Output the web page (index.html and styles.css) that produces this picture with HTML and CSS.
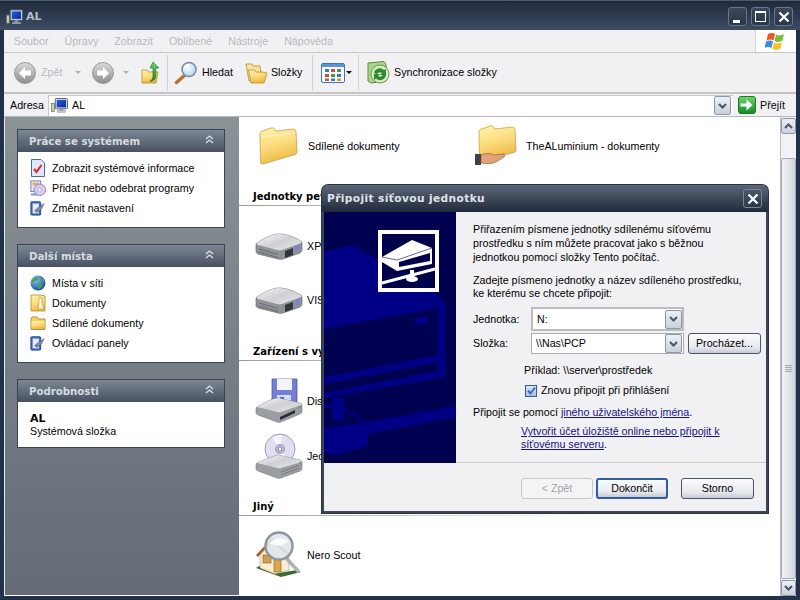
FILE: index.html
```html
<!DOCTYPE html>
<html lang="cs">
<head>
<meta charset="utf-8">
<title>AL</title>
<link rel="stylesheet" href="styles.css">
</head>
<body>
<svg class="sprite" aria-hidden="true">
  <defs>
    <linearGradient id="gFolder" x1="0" y1="0" x2="0.3" y2="1"><stop offset="0" stop-color="#fff3b0"/><stop offset="0.55" stop-color="#fbdc7c"/><stop offset="1" stop-color="#eeb945"/></linearGradient>
    <linearGradient id="gBack" x1="0" y1="0" x2="0" y2="1"><stop offset="0" stop-color="#dcdcdc"/><stop offset="1" stop-color="#8e8e8e"/></linearGradient>
    <linearGradient id="gScreen" x1="0" y1="0" x2="1" y2="1"><stop offset="0" stop-color="#2a5fe0"/><stop offset="1" stop-color="#0a2a90"/></linearGradient>
    <linearGradient id="gGreen" x1="0" y1="0" x2="0" y2="1"><stop offset="0" stop-color="#6fd56a"/><stop offset="1" stop-color="#128a24"/></linearGradient>
    <linearGradient id="gSilver" x1="0" y1="0" x2="1" y2="1"><stop offset="0" stop-color="#f6f6f6"/><stop offset="0.5" stop-color="#cfd0d3"/><stop offset="1" stop-color="#e8e8ea"/></linearGradient>
    <radialGradient id="gGlobe" cx="0.35" cy="0.3" r="0.8"><stop offset="0" stop-color="#8cc4f2"/><stop offset="1" stop-color="#123f96"/></radialGradient>
    <radialGradient id="gLens" cx="0.4" cy="0.35" r="0.7"><stop offset="0" stop-color="#ffffff"/><stop offset="1" stop-color="#a9d3f3"/></radialGradient>
    <pattern id="dDark" width="2" height="2" patternUnits="userSpaceOnUse"><rect width="2" height="2" fill="#000040"/><rect width="1" height="1" fill="#000060"/><rect x="1" y="1" width="1" height="1" fill="#000060"/></pattern>
    <pattern id="dLight" width="2" height="2" patternUnits="userSpaceOnUse"><rect width="2" height="2" fill="#00008c"/><rect width="1" height="1" fill="#00007e"/><rect x="1" y="1" width="1" height="1" fill="#00007e"/></pattern>

    <symbol id="i-pc" viewBox="0 0 18 16">
      <rect x="0.5" y="6" width="3" height="8.5" fill="#b9d6a8" stroke="#5d6a62" stroke-width="0.7"/>
      <rect x="4.5" y="0.5" width="13" height="11" rx="1" fill="#dfe3ea" stroke="#4f5a6e"/>
      <rect x="6" y="2" width="10" height="8" fill="url(#gScreen)"/>
      <rect x="9" y="11.5" width="4" height="2" fill="#8d95a3"/>
      <rect x="6.5" y="13.5" width="9" height="1.7" fill="#c3c8d0" stroke="#6d7686" stroke-width="0.4"/>
    </symbol>
    <symbol id="i-back" viewBox="0 0 22 22">
      <circle cx="11" cy="11" r="10.5" fill="url(#gBack)" stroke="#9a9a9a"/>
      <path d="M5 11l6-6v3.6h6v4.8h-6V17z" fill="#fff"/>
    </symbol>
    <symbol id="i-fwd" viewBox="0 0 22 22">
      <circle cx="11" cy="11" r="10.5" fill="url(#gBack)" stroke="#9a9a9a"/>
      <path d="M17 11l-6-6v3.6H5v4.8h6V17z" fill="#fff"/>
    </symbol>
    <symbol id="i-up" viewBox="0 0 20 23">
      <path d="M1 9h5l1.500 2H17l-2 11H1z" fill="url(#gFolder)" stroke="#b98a2c" stroke-width="0.8"/>
      <path d="M12 1l6 6h-3.200v8c0 3-2.500 5-5.800 5.400 2-1.400 3-3 3-5.400V7H9z" fill="url(#gGreen)" stroke="#0f6c1b" stroke-width="0.6"/>
    </symbol>
    <symbol id="i-search" viewBox="0 0 24 24">
      <path d="M11 14L2.500 21.500" stroke="#b3763a" stroke-width="3.600" stroke-linecap="round"/>
      <circle cx="15" cy="8.500" r="7" fill="url(#gLens)" stroke="#7c8ea3" stroke-width="1.600"/>
      <path d="M10.500 7c1-2.400 3-3.300 5-3.300" stroke="#fff" stroke-width="1.300" fill="none"/>
    </symbol>
    <symbol id="i-folders" viewBox="0 0 23 22">
      <path d="M1 2h6l1.500 2H15l1 7-12 8z" fill="#f9e39c" stroke="#b98a2c" stroke-width="0.8"/>
      <path d="M3.500 8h6l1.500 2h6l5 1-3 10H6z" fill="url(#gFolder)" stroke="#b98a2c" stroke-width="0.8"/>
    </symbol>
    <symbol id="i-views" viewBox="0 0 24 20">
      <rect x="0.500" y="0.500" width="23" height="19" rx="1.500" fill="#fff" stroke="#3f72ba"/>
      <rect x="1" y="1" width="22" height="3" fill="#5a93d8"/>
      <rect x="4" y="6" width="4" height="3" fill="#3478c4"/><rect x="10" y="6" width="4" height="3" fill="#c94c3a"/><rect x="16" y="6" width="4" height="3" fill="#3b9a4c"/>
      <rect x="4" y="11" width="4" height="3" fill="#c94c3a"/><rect x="10" y="11" width="4" height="3" fill="#3b9a4c"/><rect x="16" y="11" width="4" height="3" fill="#3478c4"/>
      <rect x="4" y="15.500" width="4" height="2.500" fill="#c65f3a"/><rect x="10" y="15.500" width="4" height="2.500" fill="#3478c4"/><rect x="16" y="15.500" width="4" height="2.500" fill="#c89a2c"/>
    </symbol>
    <symbol id="i-sync" viewBox="0 0 24 23">
      <path d="M1 2l16-1.500 2 3V20L4 22l-3-2z" fill="#a8d48c" stroke="#5a8a3c"/>
      <circle cx="13" cy="13" r="9" fill="#d9ecc9" stroke="#6a9a4c"/>
      <path d="M7 12a6 6 0 0 1 10-3l2-1v6h-6l2-2a3.500 3.500 0 0 0-5 1zM19 14a6 6 0 0 1-10 3.500l-2 1.500v-6h6l-2 2a3.500 3.500 0 0 0 5-1z" fill="#2f8a2f"/>
    </symbol>
    <symbol id="i-go" viewBox="0 0 18 18">
      <rect x="0.500" y="0.500" width="17" height="17" rx="2.500" fill="url(#gGreen)" stroke="#1c7a2c"/>
      <path d="M2.500 7.500h6V3.500l6 5.500-6 5.500v-4h-6z" fill="#fff"/>
    </symbol>
    <symbol id="i-flag" viewBox="0 0 22 20">
      <path d="M3 3c2.500-1.500 5-1.500 7 0l-1.500 6.500c-2-1.300-4.500-1.300-7 0z" fill="#e8562a"/>
      <path d="M11 3.500c2.500 1.300 5 1.300 8-.5l-1.500 6.500c-3 1.800-5.500 1.800-8 .5z" fill="#7ebb3a"/>
      <path d="M1 10.500c2.500-1.300 5-1.300 7 0L6.500 17c-2-1.300-4.500-1.300-7 0z" fill="#3e8fdc"/>
      <path d="M9 11.500c2.500 1.300 5 1.300 8-.5L15.500 17.500c-3 1.800-5.500 1.800-8 .5z" fill="#f7c32c"/>
    </symbol>
    <symbol id="i-info" viewBox="0 0 16 18">
      <path d="M1.500 .5H11L14.500 4V17.500H1.500z" fill="#dfe8f8" stroke="#4a6bab"/>
      <path d="M4 10l2.500 3L11.500 6" stroke="#d8262c" stroke-width="2" fill="none"/>
    </symbol>
    <symbol id="i-prog" viewBox="0 0 18 18">
      <rect x="1" y="1" width="11" height="12" fill="#e5e9f4" stroke="#6a7aa8"/>
      <rect x="3" y="3" width="7" height="3" fill="#e8a860"/>
      <circle cx="11" cy="11" r="6.500" fill="#d6c9ee" stroke="#8a82b8"/>
      <circle cx="11" cy="11" r="1.800" fill="#fff" stroke="#8a82b8" stroke-width="0.500"/>
      <path d="M1 15h7v2.500H1z" fill="#7ea0cf"/>
    </symbol>
    <symbol id="i-ctrl" viewBox="0 0 18 18">
      <rect x="1" y="2" width="11" height="15" rx="1" fill="#3f6fc6" stroke="#223f80"/>
      <rect x="3" y="4" width="7" height="11" fill="#e6eefb"/>
      <path d="M5 12l5-4 6-4-3 6-5 4z" fill="#7e8aa5" stroke="#3a4a6c" stroke-width="0.500"/>
    </symbol>
    <symbol id="i-globe" viewBox="0 0 16 16">
      <circle cx="8" cy="8" r="7.500" fill="url(#gGlobe)"/>
      <path d="M3 4c2-2 4-2 5-1s-1 3-3 3-1 2-2 2-1.500-2 0-4zM8 9c2-1 4 0 4 1s-2 4-3 4-2-4-1-5zM11 3l3 2v2l-2-1z" fill="#3fa84a"/>
    </symbol>
    <symbol id="i-docs" viewBox="0 0 16 18">
      <path d="M1 1h9l5 1v15H1z" fill="url(#gFolder)" stroke="#b98a2c" stroke-width="0.800"/>
      <path d="M9 3l3 1v5l1.500 6H8l1-6z" fill="#fff8e0" stroke="#b98a2c" stroke-width="0.600"/>
    </symbol>
    <symbol id="i-fold" viewBox="0 0 16 14">
      <path d="M1 2.500l1-1.500h5l1.500 2H15v10.500H1z" fill="#f6cf62" stroke="#a87c20" stroke-width="0.800"/>
      <rect x="1.500" y="5" width="13" height="8" fill="url(#gFolder)"/>
    </symbol>
    <symbol id="i-bigfolder" viewBox="0 0 40 40">
      <path d="M2 8c0-2 1-3 3-3l8-3c2-.500 3 0 4 1.500l1 1.500 17-2c2 0 3 1 3 3l1 20c0 1-.500 2-2 2.500L5 38c-1.500.300-2.500-.500-2.500-2z" fill="url(#gFolder)" stroke="#c8a048" stroke-width="0.800"/>
      <path d="M3 11c10-1 24-3 34-4" stroke="#fff6c8" stroke-width="1.200" fill="none"/>
    </symbol>
    <symbol id="i-sharefolder" viewBox="0 0 42 44">
      <path d="M4 8c0-2 1-3 3-3l8-3c2-.500 3 0 4 1.500l1 1.500 17-2c2 0 3 1 3 3l1 20c0 1-.500 2-2 2.500L7 36c-1.500.300-2.500-.500-2.500-2z" fill="url(#gFolder)" stroke="#c8a048" stroke-width="0.800"/>
      <rect x="0" y="30" width="6" height="11" fill="#3f3f44"/>
      <path d="M6 31c5-2 9-2 13 0l9-1c2 0 2 2 1 3l-8 5c-4 2-10 2-15 1z" fill="#e2a27a" stroke="#8a5030" stroke-width="0.600"/>
    </symbol>
    <symbol id="i-hdd" viewBox="0 0 48 28">
      <path d="M2 11C8 7 17 2 24 2c8 0 17 4 22 7 1 1 1 2 1 3v6c0 1-1 2-2 3l-17 6c-2 .600-3 .600-5 0L3 22c-2-1-2-2-2-3v-6c0-1 0-1.500 1-2z" fill="#8f9299" stroke="#5b5e66" stroke-width="0.600"/>
      <path d="M2 11C8 7 17 2 24 2c8 0 17 4 22 7 1 1 0 2-1 2.500L27 18c-2 .600-3 .600-5 0L3 13c-1-.300-1.500-1.300-1-2z" fill="url(#gSilver)"/>
      <path d="M4 17l19 5.500M4 20l19 5.500" stroke="#686b73" stroke-width="1"/>
      <path d="M30 19l8-3v7l-8 3z" fill="#33353c"/>
      <path d="M40 14l5-2v6l-5 2z" fill="#7b86c8"/>
    </symbol>
    <symbol id="i-floppy" viewBox="0 0 48 46">
      <path d="M17 1h25v27H17z" fill="#7480d6" stroke="#404a90" stroke-width="0.700"/>
      <rect x="22" y="1" width="15" height="11" fill="#f2f4fa"/>
      <rect x="22" y="17" width="14" height="12" fill="#d6dcf4"/>
      <rect x="25" y="19" width="4" height="8" fill="#5c68bc"/>
      <path d="M2 29c7-4 14-8 21-9l22 5c2 .500 2 1.500 2 2.500v6c0 1-1 2-2 2.500L26 44c-1 .500-3 .500-4 0L3 37c-1-.500-2-1-2-2v-4c0-1 0-1.500 1-2z" fill="#9a9da4" stroke="#6a6d75" stroke-width="0.500"/>
      <path d="M2 29c7-4 14-8 21-9l22 5c2 .500 2 1.500 0 2.500L26 34c-2 .600-2 .600-4 0z" fill="url(#gSilver)"/>
      <path d="M25 39l15-7v3l-15 7z" fill="#2b2c33"/>
      <circle cx="44" cy="29" r="1.200" fill="#56b04e"/>
    </symbol>
    <symbol id="i-cd" viewBox="0 0 48 48">
      <circle cx="25" cy="17" r="15" fill="#dfdff2" stroke="#8a8ca8" stroke-width="0.800"/>
      <path d="M25 17L17 6a15 15 0 0 1 10-3zM25 17l9 12a15 15 0 0 1-12 2z" fill="#f4f4fc"/>
      <circle cx="25" cy="17" r="4.500" fill="#bdb8d8" stroke="#6a6a80" stroke-width="0.500"/>
      <circle cx="25" cy="17" r="1.800" fill="#fff" stroke="#55556a" stroke-width="0.500"/>
      <path d="M2 31c7-3 14-6 21-8l22 5c2 .500 2 1.500 2 2.500v6c0 1-1 2-2 2.500L26 46c-1 .500-3 .500-4 0L3 39c-1-.500-2-1-2-2v-4c0-1 0-1.500 1-2z" fill="#9a9da4" stroke="#6a6d75" stroke-width="0.500"/>
      <path d="M2 31c7-3 14-6 21-8l22 5c2 .500 2 1.500 0 2.500L26 36c-2 .600-2 .600-4 0z" fill="url(#gSilver)"/>
      <path d="M26 40l18-7M26 43l18-7" stroke="#7a7d85" stroke-width="1"/>
      <circle cx="45" cy="31" r="1.100" fill="#56b04e"/>
    </symbol>
    <symbol id="i-house" viewBox="0 0 48 48">
      <path d="M1 37l25 9 20-5-4-2L24 42 4 35z" fill="#3e6b2b"/>
      <path d="M5 23v14l15 6 14-4V25L18 10z" fill="#f7ecd4" stroke="#a08a6a" stroke-width="0.500"/>
      <path d="M2 25L17 9l17 15" fill="none" stroke="#a4682c" stroke-width="2.600"/>
      <rect x="8" y="24" width="8" height="8" fill="#d0a050" stroke="#8a6020" stroke-width="0.600"/>
      <path d="M19 27h7v14h-7z" fill="#dca64a" stroke="#8a6020" stroke-width="0.600"/>
      <path d="M32 28l11 12" stroke="#aeb2b8" stroke-width="3.500" stroke-linecap="round"/>
      <circle cx="24" cy="15" r="13.500" fill="#dfe6ea" fill-opacity="0.900" stroke="#8e959c" stroke-width="2.400"/>
      <path d="M14 13c4-6 13-8 20-3l-8 5z" fill="#f8fafb"/>
    </symbol>
    <symbol id="i-panel" viewBox="0 0 132 251">
      <rect width="132" height="251" fill="url(#dDark)"/>
      <path d="M0 39L29 33 116 85c4 2 5 5 5 10V165L0 186z" fill="url(#dLight)"/>
      <path d="M0 117L114 96V143L0 165zM0 172L114 150V159L0 181z" fill="url(#dDark)"/>
      <path d="M91 106l13-2v7l-13 2z" fill="url(#dLight)"/>
      <path d="M8 186h12v18c0 3-2 5-6 5s-6-2-6-5zM0 193h8v3H0z" fill="url(#dLight)"/>
      <path d="M20 196l22 13-2 1-20-11z" fill="url(#dLight)"/>
      <path d="M0 216L44 210 132 194V205L44 222V234L10 243 0 240z" fill="url(#dLight)"/>
      <rect x="54" y="18" width="61" height="62" fill="#fff"/>
      <rect x="58" y="22" width="53" height="54" fill="#00004a"/>
      <path d="M58 45L88 28 108 36V52L73 59 58 50z" fill="#fff"/>
      <path d="M58 45L73 48 108 36" fill="none" stroke="#00004a" stroke-width="0.600"/>
      <path d="M75 50L106 41V49L75 55z" fill="#00004a"/>
      <path d="M58 71L111 57" stroke="#fff" stroke-width="3"/>
      <rect x="86" y="58" width="4" height="8" fill="#fff"/>
      <ellipse cx="88" cy="67" rx="6" ry="3" fill="#fff"/>
    </symbol>
  </defs>
</svg>

<div class="window">
  <header class="titlebar">
    <svg class="ic-title"><use href="#i-pc"/></svg>
    <span class="title-text">AL</span>
    <div class="win-btns">
      <span class="win-btn"><span class="glyph-min"></span></span>
      <span class="win-btn"><span class="glyph-max"></span></span>
      <span class="win-btn"><svg class="glyph-x" viewBox="0 0 12 12"><path d="M1.500 1.500l9 9M10.500 1.500l-9 9"/></svg></span>
    </div>
  </header>

  <nav class="menubar">
    <div class="menu-items">
      <span>Soubor</span><span>Úpravy</span><span>Zobrazit</span><span>Oblíbené</span><span>Nástroje</span><span>Nápověda</span>
    </div>
    <div class="logo-box"><svg class="ic-flag"><use href="#i-flag"/></svg></div>
  </nav>

  <div class="toolbar">
    <div class="tb-group tb-nav">
      <svg class="ic-22"><use href="#i-back"/></svg>
      <span class="tb-disabled">Zpět</span>
      <span class="tri tri-gray tri-back"></span>
      <svg class="ic-22 ic-fwd"><use href="#i-fwd"/></svg>
      <span class="tri tri-gray tri-fwd"></span>
      <svg class="ic-up"><use href="#i-up"/></svg>
    </div>
    <div class="tb-group tb-find">
      <svg class="ic-24"><use href="#i-search"/></svg>
      <span class="tb-label">Hledat</span>
      <svg class="ic-folders"><use href="#i-folders"/></svg>
      <span class="tb-label">Složky</span>
    </div>
    <div class="tb-group tb-views">
      <svg class="ic-views"><use href="#i-views"/></svg>
      <span class="tri tri-dark"></span>
    </div>
    <div class="tb-group tb-sync">
      <svg class="ic-sync"><use href="#i-sync"/></svg>
      <span class="tb-label">Synchronizace složky</span>
    </div>
  </div>

  <div class="addressbar">
    <span class="addr-label">Adresa</span>
    <div class="addr-input">
      <svg class="ic-addr"><use href="#i-pc"/></svg>
      <span class="addr-value">AL</span>
      <span class="combo-arrow combo-arrow-addr"><svg viewBox="0 0 9 6"><path d="M1 1l3.500 3.500L8 1"/></svg></span>
    </div>
    <svg class="ic-go"><use href="#i-go"/></svg>
    <span class="go-label">Přejít</span>
  </div>

  <div class="main">
    <aside class="sidebar">
      <section class="pane">
        <div class="pane-head"><span>Práce se systémem</span><svg class="chev" viewBox="0 0 9 9"><path d="M1 4l3.500-3L8 4M1 8l3.500-3L8 8"/></svg></div>
        <ul class="pane-body">
          <li><svg class="ic-16"><use href="#i-info"/></svg>Zobrazit systémové informace</li>
          <li><svg class="ic-16"><use href="#i-prog"/></svg>Přidat nebo odebrat programy</li>
          <li><svg class="ic-16"><use href="#i-ctrl"/></svg>Změnit nastavení</li>
        </ul>
      </section>
      <section class="pane">
        <div class="pane-head"><span>Další místa</span><svg class="chev" viewBox="0 0 9 9"><path d="M1 4l3.500-3L8 4M1 8l3.500-3L8 8"/></svg></div>
        <ul class="pane-body">
          <li><svg class="ic-16"><use href="#i-globe"/></svg>Místa v síti</li>
          <li><svg class="ic-16"><use href="#i-docs"/></svg>Dokumenty</li>
          <li><svg class="ic-16"><use href="#i-fold"/></svg>Sdílené dokumenty</li>
          <li><svg class="ic-16"><use href="#i-ctrl"/></svg>Ovládací panely</li>
        </ul>
      </section>
      <section class="pane">
        <div class="pane-head"><span>Podrobnosti</span><svg class="chev" viewBox="0 0 9 9"><path d="M1 4l3.500-3L8 4M1 8l3.500-3L8 8"/></svg></div>
        <div class="pane-details"><strong>AL</strong><span>Systémová složka</span></div>
      </section>
    </aside>

    <div class="content">
      <div class="row row-top">
        <div class="item item-first"><svg class="ic-big"><use href="#i-bigfolder"/></svg><span>Sdílené dokumenty</span></div>
        <div class="item"><svg class="ic-share"><use href="#i-sharefolder"/></svg><span>TheALuminium - dokumenty</span></div>
      </div>
      <h2 class="group group-disks">Jednotky pevných disků</h2>
      <div class="item item-xp"><svg class="ic-hdd"><use href="#i-hdd"/></svg><span>XP (C:)</span></div>
      <div class="item item-vis"><svg class="ic-hdd"><use href="#i-hdd"/></svg><span>VISTA (D:)</span></div>
      <h2 class="group group-removable">Zařízení s vyměnitelným úložištěm</h2>
      <div class="item item-dis"><svg class="ic-drive"><use href="#i-floppy"/></svg><span>Disketová jednotka (A:)</span></div>
      <div class="item item-jed"><svg class="ic-drive"><use href="#i-cd"/></svg><span>Jednotka DVD (E:)</span></div>
      <h2 class="group group-other">Jiný</h2>
      <div class="item item-nero"><svg class="ic-drive"><use href="#i-house"/></svg><span>Nero Scout</span></div>
    </div>

    <div class="scrollbar">
      <span class="sb-btn sb-up"><svg viewBox="0 0 9 6"><path d="M1 5l3.500-3.500L8 5"/></svg></span>
      <div class="sb-track"><div class="sb-thumb"><span class="sb-grip"></span></div></div>
      <span class="sb-btn sb-down"><svg viewBox="0 0 9 6"><path d="M1 1l3.500 3.500L8 1"/></svg></span>
    </div>
  </div>

  <div class="dialog">
    <div class="dlg-title">
      <span>Připojit síťovou jednotku</span>
      <span class="dlg-close"><svg class="glyph-x" viewBox="0 0 12 12"><path d="M1.500 1.500l9 9M10.500 1.500l-9 9"/></svg></span>
    </div>
    <div class="dlg-body">
      <div class="dlg-upper">
        <svg class="dlg-art"><use href="#i-panel"/></svg>
        <div class="dlg-form">
          <p class="p-intro">Přiřazením písmene jednotky sdílenému síťovému prostředku s ním můžete pracovat jako s běžnou jednotkou pomocí složky Tento počítač.</p>
          <p class="p-enter">Zadejte písmeno jednotky a název sdíleného prostředku,<br>ke kterému se chcete připojit:</p>
          <div class="field field-drive">
            <label>Jednotka:</label>
            <div class="combo"><span>N:</span><span class="combo-arrow"><svg viewBox="0 0 9 6"><path d="M1 1l3.500 3.500L8 1"/></svg></span></div>
          </div>
          <div class="field field-folder">
            <label>Složka:</label>
            <div class="combo combo-path"><span>\\Nas\PCP</span><span class="combo-arrow"><svg viewBox="0 0 9 6"><path d="M1 1l3.500 3.500L8 1"/></svg></span></div>
            <span class="btn btn-browse">Procházet...</span>
          </div>
          <p class="p-example">Příklad: \\server\prostředek</p>
          <div class="check-row"><span class="check"><svg viewBox="0 0 11 11"><path d="M2 5.500l2.500 3L9 2.500"/></svg></span><span>Znovu připojit při přihlášení</span></div>
          <p class="p-user">Připojit se pomocí <a href="#">jiného uživatelského jména</a>.</p>
          <p class="p-online"><a href="#">Vytvořit účet úložiště online nebo připojit k síťovému serveru</a>.</p>
        </div>
      </div>
      <div class="dlg-footer">
        <span class="btn btn-foot btn-disabled">&lt; Zpět</span>
        <span class="btn btn-foot btn-default">Dokončit</span>
        <span class="btn btn-foot btn-cancel">Storno</span>
      </div>
    </div>
  </div>
</div>
</body>
</html>
```

FILE: styles.css
```css
* { box-sizing: border-box; }
html, body { margin: 0; padding: 0; }
body { width: 800px; height: 600px; overflow: hidden; font: 10.700px/13px "Liberation Sans", Arial, sans-serif; color: #000; }
.sprite { position: absolute; width: 0; height: 0; }
svg { display: block; flex: none; }

.window { position: relative; width: 800px; height: 600px; display: flex; flex-direction: column; background: #22304a; }

/* title bar */
.titlebar { height: 30px; flex: none; display: flex; align-items: center; padding: 2px 7px 0 6px; border-top: 1px solid #4c5a70; background: linear-gradient(#1f2a3c, #3e4c62); }
.ic-title { width: 17px; height: 16px; margin-right: 3px; }
.title-text { font: bold 11px/13px "DejaVu Sans", sans-serif; color: #b6bdc7; }
.win-btns { margin-left: auto; display: flex; gap: 4px; }
.win-btn { width: 19px; height: 19px; border: 1px solid #69768a; border-radius: 3px; background: linear-gradient(#3a475c, #2a3649); display: flex; align-items: center; justify-content: center; }
.glyph-min { width: 7px; height: 3px; background: #fff; margin-top: 9px; margin-right: 3px; }
.glyph-max { width: 11px; height: 11px; border: 1px solid #fff; border-top-width: 2px; }
.glyph-x { width: 12px; height: 12px; fill: none; stroke: #fff; stroke-width: 2.200px; }

/* menu bar */
.menubar { height: 23px; flex: none; margin: 0 4px; display: flex; justify-content: space-between; background: #f1f1f4; border-bottom: 1px solid #c6c6c6; }
.menu-items { display: flex; align-items: center; padding-left: 10px; gap: 16px; color: #b9b9bc; }
.logo-box { width: 41px; background: #fff; border-left: 1px solid #d4d4d8; display: flex; align-items: center; justify-content: center; }
.ic-flag { width: 22px; height: 20px; }

/* toolbar */
.toolbar { height: 41px; flex: none; margin: 0 4px; display: flex; align-items: center; background: #f1f1f4; border-bottom: 2px solid #c4c4c6; padding-left: 10px; }
.tb-group { display: flex; align-items: center; height: 36px; }
.tb-nav { width: 154px; border-right: 1px solid #d2d2d6; }
.tb-disabled { color: #b9b9bc; margin-left: 5px; }
.tri { width: 0; height: 0; border: 3px solid transparent; border-bottom: 0; }
.tri-gray { border-top-color: #b0b0b4; }
.tri-dark { border-top-color: #111; margin-left: 1px; }
.tri-back { margin-left: 13px; }
.ic-22 { width: 22px; height: 22px; }
.ic-fwd { margin-left: 11px; }
.tri-fwd { margin-left: 9px; }
.ic-up { width: 20px; height: 23px; margin-left: 12px; }
.tb-find { width: 145px; padding-left: 6px; border-right: 1px solid #d2d2d6; }
.ic-24 { width: 24px; height: 24px; }
.tb-label { margin-left: 4px; }
.ic-folders { width: 23px; height: 22px; margin-left: 12px; }
.ic-folders + .tb-label { margin-left: 3px; }
.tb-views { width: 46px; padding-left: 8px; border-right: 1px solid #d2d2d6; }
.ic-views { width: 24px; height: 20px; }
.tb-sync { padding-left: 8px; }
.tb-sync .tb-label { margin-left: 3px; }
.ic-sync { width: 24px; height: 23px; }

/* address bar */
.addressbar { height: 23px; flex: none; margin: 0 4px; display: flex; align-items: center; background: #f1f1f4; border-bottom: 1px solid #b8b8bc; }
.addr-label { width: 44px; padding-left: 6px; }
.addr-input { flex: 1; height: 21px; background: #fff; border-top: 1px solid #c8c8c8; border-left: 1px solid #c8c8c8; display: flex; align-items: center; padding-left: 2px; }
.ic-addr { width: 17px; height: 15px; }
.addr-value { margin-left: 4px; }
.combo-arrow-addr { margin-left: auto; margin-right: 2px; }
.combo-arrow { width: 17px; height: 19px; border: 1px solid #8d97a8; border-radius: 2px; background: linear-gradient(#eef0f5, #c9d0dc); display: flex; align-items: center; justify-content: center; }
.combo-arrow svg, .sb-btn svg { width: 9px; height: 6px; fill: none; stroke: #4a5568; stroke-width: 2px; }
.ic-go { width: 18px; height: 18px; margin-left: 5px; }
.go-label { width: 40px; padding-left: 4px; }

/* main */
.main { flex: 1; min-height: 0; margin: 0 4px 4px; display: flex; }
.sidebar { width: 235px; flex: none; padding: 12px 0 0 12px; background: linear-gradient(#8b9296, #656b76); border-left: 1px solid #e8e8e8; border-bottom: 1px solid #fff; }
.pane { width: 208px; margin-bottom: 16px; border: 1px solid #37435a; background: #fff; }
.pane-head { height: 22px; display: flex; align-items: center; justify-content: space-between; padding: 0 10px 0 11px; background: linear-gradient(#7d8894, #465062); color: #d7dbe0; font: bold 10.200px/13px "DejaVu Sans", sans-serif; }
.chev { width: 9px; height: 9px; fill: none; stroke: #dfe3e8; stroke-width: 1.300px; margin-bottom: 3px; }
.pane-body { list-style: none; margin: 0; padding: 6px 0 9px 12px; }
.pane-body li { height: 20px; display: flex; align-items: center; gap: 6px; }
.ic-16 { width: 16px; height: 18px; }
.pane-details { padding: 10px 0 9px 12px; display: flex; flex-direction: column; }
.pane-details strong { font: bold 11px/13px "DejaVu Sans", sans-serif; }

.content { width: 541px; flex: none; background: #fff; padding-top: 5px; overflow: hidden; }
.row-top { display: grid; grid-template-columns: 217px 1fr; padding-left: 16px; }
.item { height: 48px; display: flex; align-items: center; white-space: nowrap; padding-left: 16px; }
.row-top .item { padding-left: 0; }
.item-first svg { margin-left: 3px; margin-right: 10px; }
.ic-big { width: 40px; height: 40px; }
.ic-share { width: 42px; height: 44px; margin-left: 3px; margin-right: 9px; }
.ic-hdd { width: 48px; height: 28px; margin-right: 4px; }
.ic-drive { width: 48px; height: 48px; margin-right: 4px; }
.group { margin: 0; height: 18px; padding-left: 14px; font: bold 10px/18px "DejaVu Sans", sans-serif; white-space: nowrap; background: linear-gradient(90deg, #9a9a9a, #fff 65%) left bottom / 100% 1px no-repeat; }
.group-disks { margin-top: 18px; }
.item-xp { margin-top: 16px; }
.item-vis { margin-top: 6px; }
.group-removable { margin-top: 19px; }
.item-dis { margin-top: 16px; }
.item-jed { margin-top: 7px; }
.group-other { margin-top: 18px; }
.item-nero { margin-top: 15px; }

.scrollbar { width: 16px; flex: none; display: flex; flex-direction: column; background: #f0f2f6; border-left: 1px solid #b8bcc4; }
.sb-btn { height: 17px; margin: 1px 0 0; border: 1px solid #8d97a8; border-radius: 2px; background: linear-gradient(#eef0f5, #c9d0dc); display: flex; align-items: center; justify-content: center; }
.sb-track { flex: 1; padding-top: 24px; }
.sb-thumb { height: 421px; border: 1px solid #a6adba; border-radius: 2px; background: linear-gradient(90deg, #f2f3f7, #d3d7e0); display: flex; align-items: center; justify-content: center; }
.sb-grip { width: 7px; height: 7px; background: repeating-linear-gradient(#a5a9b2 0 1px, transparent 1px 2px); }

/* dialog */
.dialog { position: absolute; left: 322px; top: 185px; width: 446px; height: 328px; display: flex; flex-direction: column; border: 2px solid #3c4658; border-top: 0; border-radius: 6px 6px 0 0; background: #f1f1f4; box-shadow: 0 0 0 1px #2a3342; }
.dlg-title { height: 27px; flex: none; margin: 0 -2px; padding: 0 6px 0 5px; display: flex; align-items: center; justify-content: space-between; border-radius: 6px 6px 0 0; background: linear-gradient(#5b6776, #1f2a3b); color: #e0e4ea; font: bold 10.600px/13px "DejaVu Sans", sans-serif; letter-spacing: .4px; }
.dlg-close { width: 19px; height: 19px; border: 1px solid #7a8696; border-radius: 3px; background: linear-gradient(#4a5668, #2a3649); display: flex; align-items: center; justify-content: center; }
.dlg-body { flex: 1; display: flex; flex-direction: column; min-height: 0; }
.dlg-upper { height: 251px; flex: none; display: flex; border-bottom: 1px solid #cbcbd0; }
.dlg-art { width: 132px; height: 251px; }
.dlg-form { flex: 1; padding: 10px 0 0 17px; }
.dlg-form p { margin: 0; }
.p-intro { line-height: 14px; width: 270px; }
.dlg-form .p-enter { margin-top: 10px; }
.field { display: flex; align-items: center; }
.field label { width: 58px; }
.field-drive { margin-top: 7px; height: 24px; }
.field-folder { margin-top: 2px; height: 21px; }
.combo { width: 153px; height: 100%; border: 1px solid #a8acb2; background: #fff; display: flex; align-items: center; justify-content: space-between; padding: 0 1px 0 4px; }
.field-drive .combo { border-width: 2px; border-color: #bcbcc0; padding-right: 0; }
.btn { display: flex; align-items: center; justify-content: center; border: 1px solid #4a5568; border-radius: 3px; background: linear-gradient(#fbfbfd, #e8e9ee 70%, #c6cad4); }
.btn-browse { width: 73px; height: 21px; margin-left: 4px; }
.dlg-form .p-example { margin: 10px 0 0 51px; }
.check-row { display: flex; align-items: center; gap: 4px; margin: 7px 0 0 52px; height: 13px; }
.check { width: 12px; height: 12px; border: 1px solid #3a5a8c; background: linear-gradient(#dbe4f2, #aebfda); display: flex; align-items: center; justify-content: center; }
.check svg { width: 11px; height: 11px; fill: none; stroke: #2f6fd0; stroke-width: 2px; }
.dlg-form .p-user { margin-top: 9px; }
.dlg-form .p-online { margin: 6px 0 0 48px; width: 215px; }
a { color: #14147e; }
.dlg-footer { flex: 1; display: flex; align-items: flex-start; padding: 15px 0 0 197px; }
.btn-foot { height: 21px; width: 72px; }
.btn-disabled { color: #a4a4a8; background: #f4f4f6; border-color: #c8c8cc; }
.btn-default { margin-left: 3px; border: 2px solid #2e5e9c; }
.btn-cancel { margin-left: 13px; width: 73px; }
```
